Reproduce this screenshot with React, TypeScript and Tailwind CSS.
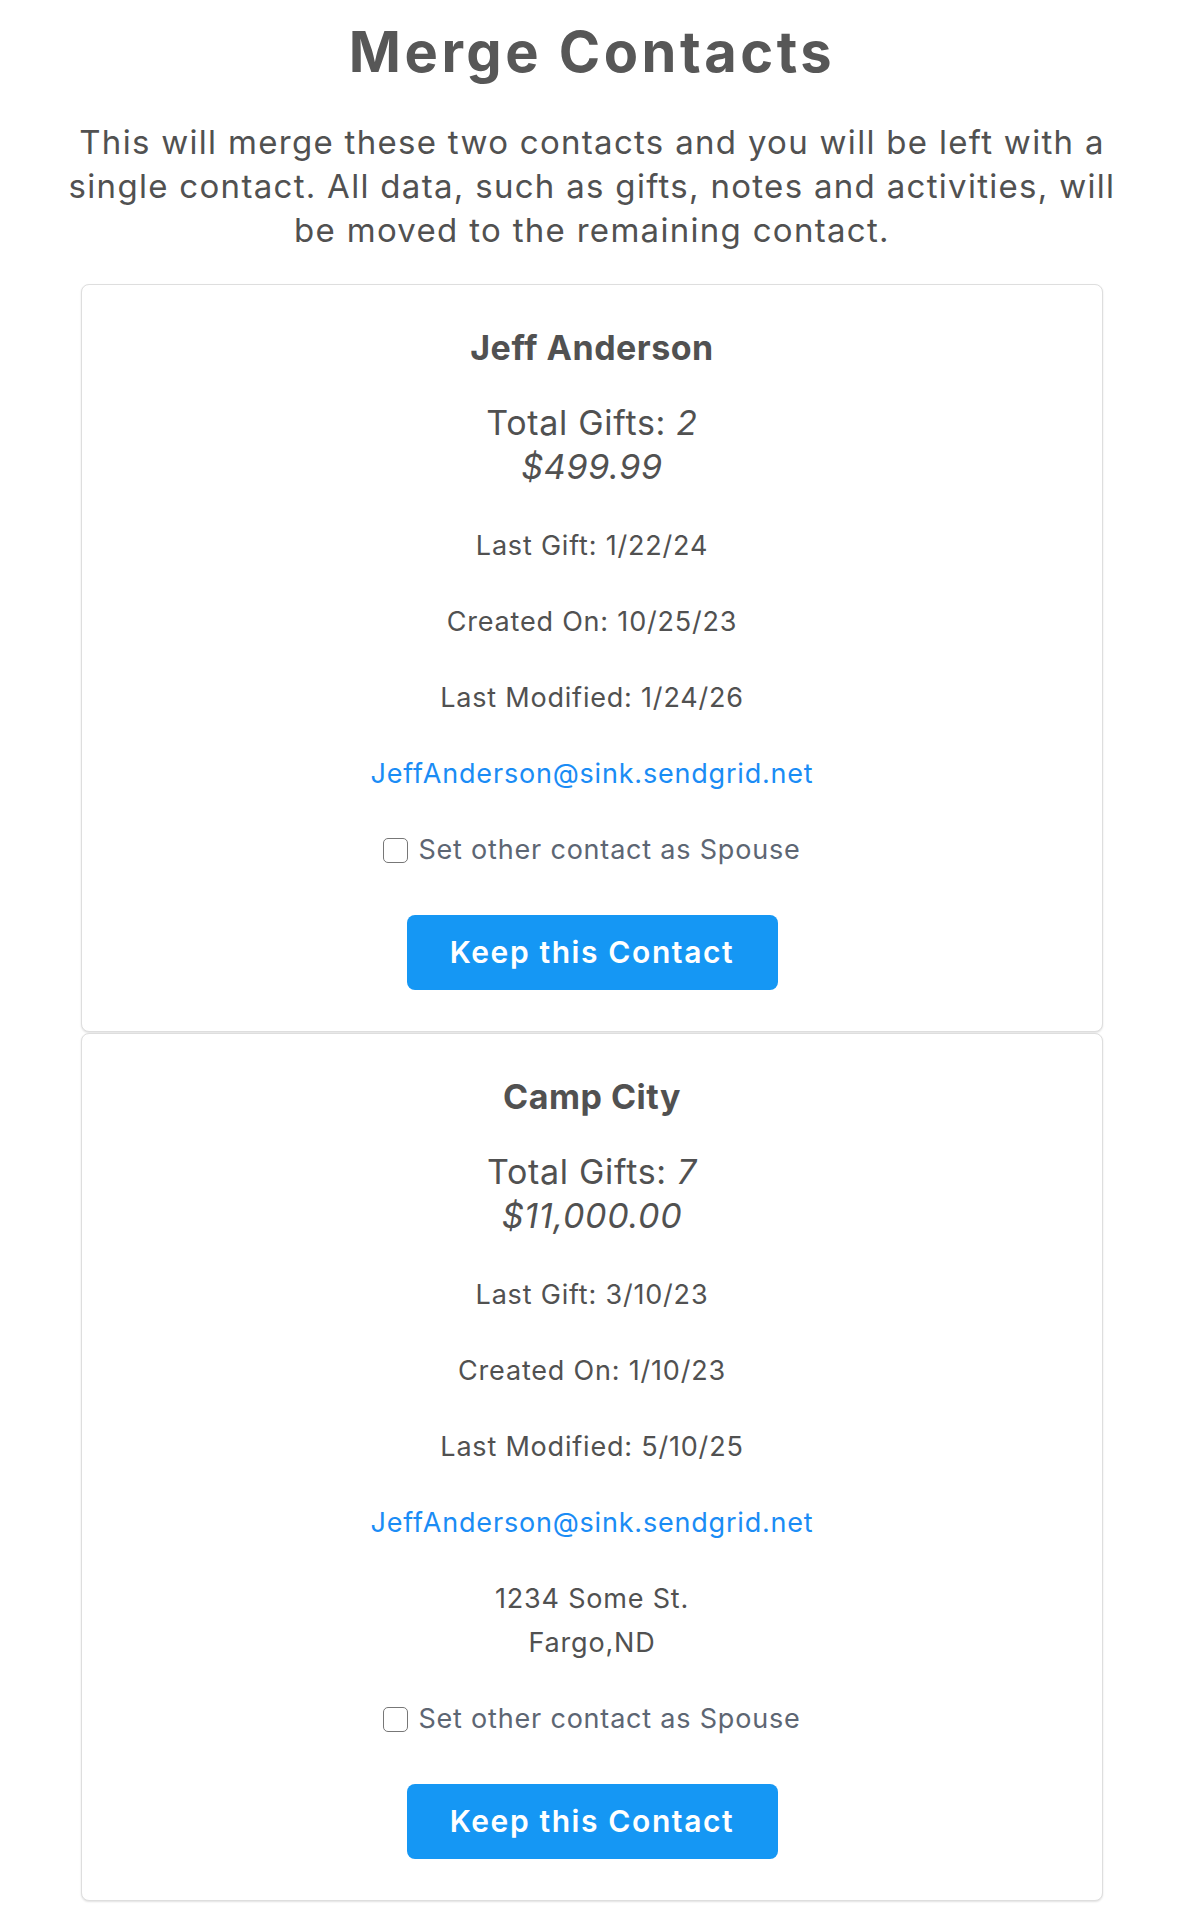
import React from "react";

type Contact = {
  name: string;
  gifts: number;
  total: string;
  lastGift: string;
  created: string;
  modified: string;
  email: string;
  address?: [string, string];
};

const contacts: Contact[] = [
  {
    name: "Jeff Anderson",
    gifts: 2,
    total: "$499.99",
    lastGift: "1/22/24",
    created: "10/25/23",
    modified: "1/24/26",
    email: "JeffAnderson@sink.sendgrid.net",
  },
  {
    name: "Camp City",
    gifts: 7,
    total: "$11,000.00",
    lastGift: "3/10/23",
    created: "1/10/23",
    modified: "5/10/25",
    email: "JeffAnderson@sink.sendgrid.net",
    address: ["1234 Some St.", "Fargo,ND"],
  },
];

function Card({ c }: { c: Contact }) {
  return (
    <div className="mx-[81px] flex flex-col items-center rounded-lg border border-[#dedede] bg-white pt-[41px] pb-[41px] text-center shadow-[0_1px_2px_rgba(0,0,0,0.12)]">
      <div className="text-[34px] font-bold leading-[44px] tracking-[0.5px] text-[#515151]">{c.name}</div>
      <div className="mt-[31px] text-[34px] leading-[44px] tracking-[0.7px] text-[#515151]">
        <div>
          Total Gifts: <span className="italic">{c.gifts}</span>
        </div>
        <div className="italic">{c.total}</div>
      </div>
      <div className="mt-[35px] flex flex-col items-center gap-[32px] text-[27px] leading-[44px] tracking-[0.8px] text-[#515151]">
        <div>Last Gift: {c.lastGift}</div>
        <div>Created On: {c.created}</div>
        <div>Last Modified: {c.modified}</div>
        <div className="text-[#1a8cf5]">{c.email}</div>
        {c.address && (
          <div>
            <div>{c.address[0]}</div>
            <div>{c.address[1]}</div>
          </div>
        )}
        <label className="flex items-center text-[#5d6673]">
          <span className="mr-[10px] inline-block h-[25px] w-[25px] rounded-[5px] border-[1.5px] border-[#777] bg-white" />
          Set other contact as Spouse
        </label>
      </div>
      <button className="mt-[43px] flex h-[75px] w-[371px] items-center justify-center rounded-[8px] bg-[#1597f4] text-[30px] font-semibold tracking-[1.6px] text-white">
        Keep this Contact
      </button>
    </div>
  );
}

export default function App() {
  return (
    <div className="w-[1184px] bg-white pb-[23px] font-['Inter','Liberation_Sans',sans-serif]">
      <h1 className="pt-[19px] text-center text-[56px] font-bold leading-[67px] tracking-[3.5px] text-[#575757]">
        Merge Contacts
      </h1>
      <p className="mt-[34px] px-[57px] text-center text-[33px] leading-[44px] tracking-[1.3px] text-[#515151]">
        This will merge these two contacts and you will be left with a single contact. All data, such as gifts, notes
        and activities, will be moved to the remaining contact.
      </p>
      <div className="mt-[32px] flex flex-col gap-[1px]">
        {contacts.map((c, i) => (
          <Card key={i} c={c} />
        ))}
      </div>
    </div>
  );
}
